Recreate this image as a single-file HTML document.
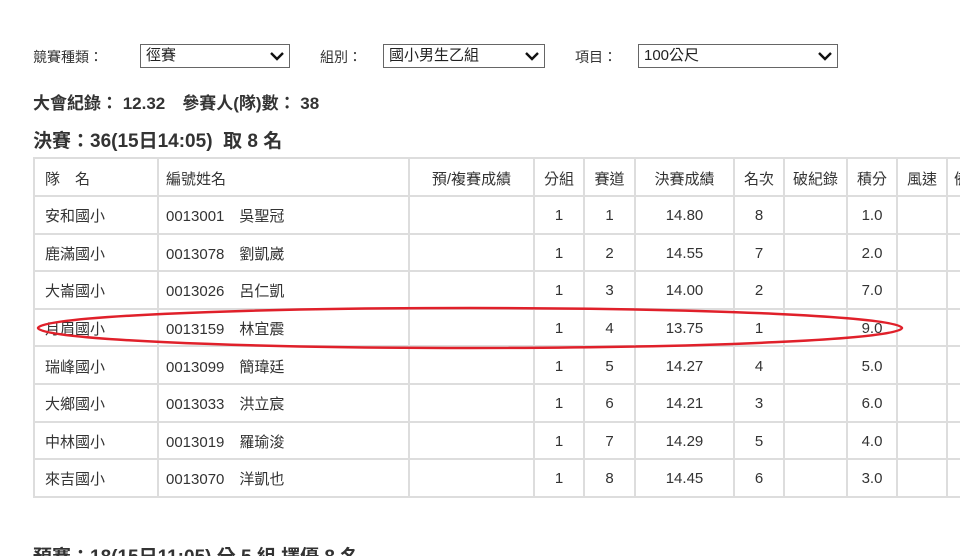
<!DOCTYPE html>
<html><head><meta charset="utf-8"><style>
*{margin:0;padding:0;box-sizing:border-box}
html,body{width:960px;height:556px;overflow:hidden}
body{background:#fff;font-family:"Liberation Sans","Noto Sans CJK TC",sans-serif;color:#333;position:relative}
.a{position:absolute;white-space:nowrap}
.lbl{font-size:14px;top:47px}
.sel{position:absolute;top:44px;height:24px;border:1px solid #666;font-size:15px;line-height:22px;padding-left:5px;color:#222}
.sel svg{position:absolute;right:5px;top:7px}
table{position:absolute;left:33px;top:157px;width:993px;border-collapse:collapse;table-layout:fixed;font-size:15px}
td{border:2px solid #ddd;height:37.6px;padding:2px 0 0 0;text-align:center;white-space:nowrap;overflow:hidden}
tr:first-child td{height:38px}
td.l{text-align:left;padding-left:10px}
td.m{text-align:left;padding-left:7px}
</style></head><body>
<div class="a lbl" style="left:33px">競賽種類：</div>
<div class="sel" style="left:140px;width:150px">徑賽<svg width="14" height="9" viewBox="0 0 14 9"><path d="M1 1L7 7L13 1" stroke="#111" stroke-width="2.4" fill="none"/></svg></div>
<div class="a lbl" style="left:320px">組別：</div>
<div class="sel" style="left:383px;width:162px">國小男生乙組<svg width="14" height="9" viewBox="0 0 14 9"><path d="M1 1L7 7L13 1" stroke="#111" stroke-width="2.4" fill="none"/></svg></div>
<div class="a lbl" style="left:575px">項目：</div>
<div class="sel" style="left:638px;width:200px">100公尺<svg width="14" height="9" viewBox="0 0 14 9"><path d="M1 1L7 7L13 1" stroke="#111" stroke-width="2.4" fill="none"/></svg></div>
<div class="a" style="left:33px;top:89px;font-size:17px;font-weight:bold">大會紀錄： 12.32　參賽人(隊)數： 38</div>
<div class="a" style="left:33px;top:126px;font-size:19px;font-weight:bold">決賽：36(15日14:05)&nbsp; 取 8 名</div>
<table>
<colgroup><col style="width:124px"><col style="width:251px"><col style="width:125px"><col style="width:50px"><col style="width:51px"><col style="width:99px"><col style="width:50px"><col style="width:63px"><col style="width:50px"><col style="width:50px"><col style="width:80px"></colgroup>
<tr><td class="l">隊　名</td><td class="m">編號姓名</td><td>預/複賽成績</td><td>分組</td><td>賽道</td><td>決賽成績</td><td>名次</td><td>破紀錄</td><td>積分</td><td>風速</td><td class="l" style="padding-left:6px">備註</td></tr>
<tr><td class="l">安和國小</td><td class="m">0013001　吳聖冠</td><td></td><td>1</td><td>1</td><td>14.80</td><td>8</td><td></td><td>1.0</td><td></td><td></td></tr>
<tr><td class="l">鹿滿國小</td><td class="m">0013078　劉凱崴</td><td></td><td>1</td><td>2</td><td>14.55</td><td>7</td><td></td><td>2.0</td><td></td><td></td></tr>
<tr><td class="l">大崙國小</td><td class="m">0013026　呂仁凱</td><td></td><td>1</td><td>3</td><td>14.00</td><td>2</td><td></td><td>7.0</td><td></td><td></td></tr>
<tr><td class="l">月眉國小</td><td class="m">0013159　林宜震</td><td></td><td>1</td><td>4</td><td>13.75</td><td>1</td><td></td><td>9.0</td><td></td><td></td></tr>
<tr><td class="l">瑞峰國小</td><td class="m">0013099　簡瑋廷</td><td></td><td>1</td><td>5</td><td>14.27</td><td>4</td><td></td><td>5.0</td><td></td><td></td></tr>
<tr><td class="l">大鄉國小</td><td class="m">0013033　洪立宸</td><td></td><td>1</td><td>6</td><td>14.21</td><td>3</td><td></td><td>6.0</td><td></td><td></td></tr>
<tr><td class="l">中林國小</td><td class="m">0013019　羅瑜浚</td><td></td><td>1</td><td>7</td><td>14.29</td><td>5</td><td></td><td>4.0</td><td></td><td></td></tr>
<tr><td class="l">來吉國小</td><td class="m">0013070　洋凱也</td><td></td><td>1</td><td>8</td><td>14.45</td><td>6</td><td></td><td>3.0</td><td></td><td></td></tr>
</table>
<svg class="a" style="left:0;top:0" width="960" height="556"><ellipse cx="470" cy="328" rx="432" ry="20" fill="none" stroke="#e0202a" stroke-width="2.5"/></svg>
<div class="a" style="left:33px;top:542px;font-size:19px;font-weight:bold">預賽：18(15日11:05) 分 5 組 擇優 8 名</div>
</body></html>
